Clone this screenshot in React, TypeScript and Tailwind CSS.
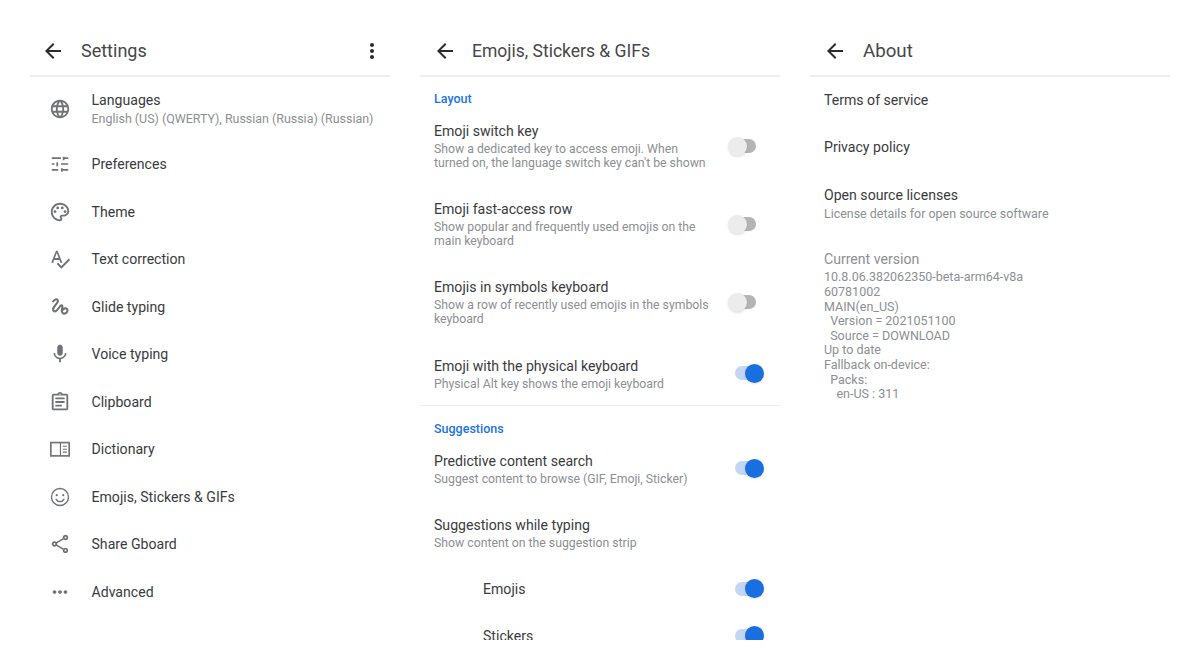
import type { ReactNode } from "react";
import {
  MdLanguage,
  MdMic,
  MdMoreHoriz,
  MdOutlineAssignment,
  MdOutlinePalette,
  MdOutlineShare,
  MdSpellcheck,
} from "react-icons/md";

const ICON = "w-[22px] h-[22px]";

function TuneIcon() {
  return (
    <svg viewBox="0 0 24 24" className={ICON} fill="none" stroke="currentColor" strokeWidth="1.900">
      <path d="M3 5.500h10M16 5.500h5M16 4v4M3 12h3M9 10v4.500M9 12h1M13 12h8M3 18.500h7M14 18.500h7M14 16.500v4" />
    </svg>
  );
}

function GlideIcon() {
  return (
    <svg viewBox="0 0 24 24" className={ICON} fill="none" stroke="currentColor" strokeWidth="2.300" strokeLinecap="round">
      <path d="M4.500 6C7 2.500 10.500 3 9.500 6.500 8 10 3.500 12 4.500 15.500 6 19 9.500 15 11.500 12 13 9.500 15 9.500 14.500 12.500 14 14.500 13 17.500 15.500 19 18.500 20 21 17 20 14.500 19 12.500 15.500 13.500 14.500 15.500" />
    </svg>
  );
}

function DictionaryIcon() {
  return (
    <svg viewBox="0 0 24 24" className={ICON} fill="none" stroke="currentColor" strokeWidth="1.800">
      <rect x="2" y="5" width="20" height="14.500" />
      <path d="M12.500 5v14.500M15 9h4.500M15 12.300h4.500M15 15.500h4.500" strokeWidth="1.300" />
    </svg>
  );
}

function SmileIcon() {
  return (
    <svg viewBox="0 0 24 24" className={ICON} fill="none" stroke="currentColor" strokeWidth="1.500">
      <circle cx="12" cy="12" r="9.300" />
      <circle cx="8.500" cy="10" r="1.200" fill="currentColor" stroke="none" />
      <circle cx="15.500" cy="10" r="1.200" fill="currentColor" stroke="none" />
      <path d="M7.800 14.500c1 1.800 2.500 2.600 4.200 2.600s3.200-.8 4.200-2.600" strokeLinecap="round" />
    </svg>
  );
}

function BackArrow() {
  return (
    <svg viewBox="0 0 24 24" className="w-6 h-6 text-[#2a2b2d]" fill="currentColor">
      <path d="M20 11H7.830l5.590-5.590L12 4l-8 8 8 8 1.410-1.410L7.830 13H20v-2z" />
    </svg>
  );
}

function MoreVert() {
  return (
    <svg viewBox="0 0 24 24" className="w-6 h-6 text-[#2a2b2d]" fill="currentColor">
      <path d="M12 8c1.100 0 2-.9 2-2s-.9-2-2-2-2 .9-2 2 .9 2 2 2zm0 2c-1.100 0-2 .9-2 2s.9 2 2 2 2-.9 2-2-.9-2-2-2zm0 6c-1.100 0-2 .9-2 2s.9 2 2 2 2-.9 2-2-.9-2-2-2z" />
    </svg>
  );
}

function Toggle({ on, className = "" }: { on: boolean; className?: string }) {
  if (on) {
    return (
      <div className={`flex items-center shrink-0 w-[29px] h-5 ${className}`}>
        <div className="w-6 h-[14px] rounded-full bg-[#c3d7f5]" />
        <div className="w-[19px] h-[19px] -ml-[14px] rounded-full bg-[#1a6fe0] shadow-sm" />
      </div>
    );
  }
  return (
    <div className="flex items-center shrink-0 w-[29px] h-5 -translate-x-[7px]">
      <div className="w-[19px] h-[19px] rounded-full bg-[#ececec] shadow-sm z-10" />
      <div className="w-4 h-[14px] -ml-[7px] rounded-r-full bg-[#b4b4b4]" />
    </div>
  );
}

function Text({ title, sub, mid }: { title: string; sub?: ReactNode; mid?: boolean }) {
  return (
    <div className="flex-1 min-w-0">
      <div className={`text-[14.100px] text-[#3a3b3e] ${mid ? "leading-[18px]" : "leading-4"}`}>{title}</div>
      {sub && (
        <div
          className={`leading-[14.400px] text-[#8c8f93] whitespace-pre-line ${
            mid ? "text-[12.250px] mt-[2px]" : "text-[12.450px] mt-1"
          }`}
        >
          {sub}
        </div>
      )}
    </div>
  );
}

function Header({ title, more, inset, size }: { title: string; more?: boolean; inset: string; size: string }) {
  return (
    <div className={`flex items-center h-[50px] border-b-2 border-[#eeeeee] ${inset}`}>
      <BackArrow />
      <div className={`flex-1 text-[#45474a] ${size}`}>{title}</div>
      {more && <MoreVert />}
    </div>
  );
}

const MENU = [
  { title: "Preferences", icon: <TuneIcon /> },
  { title: "Theme", icon: <MdOutlinePalette className={ICON} /> },
  { title: "Text correction", icon: <MdSpellcheck className={ICON} /> },
  { title: "Glide typing", icon: <GlideIcon /> },
  { title: "Voice typing", icon: <MdMic className={ICON} /> },
  { title: "Clipboard", icon: <MdOutlineAssignment className={ICON} /> },
  { title: "Dictionary", icon: <DictionaryIcon /> },
  { title: "Emojis, Stickers & GIFs", icon: <SmileIcon /> },
  { title: "Share Gboard", icon: <MdOutlineShare className={ICON} /> },
  { title: "Advanced", icon: <MdMoreHoriz className={ICON} /> },
];

const LAYOUT_ROWS = [
  { title: "Emoji switch key", sub: "Show a dedicated key to access emoji. When\nturned on, the language switch key can't be shown" },
  { title: "Emoji fast-access row", sub: "Show popular and frequently used emojis on the\nmain keyboard" },
  { title: "Emojis in symbols keyboard", sub: "Show a row of recently used emojis in the symbols\nkeyboard" },
];

const VERSION_INFO = `10.8.06.382062350-beta-arm64-v8a
60781002
MAIN(en_US)
\u00a0\u00a0Version = 2021051100
\u00a0\u00a0Source = DOWNLOAD
Up to date
Fallback on-device:
\u00a0\u00a0Packs:
\u00a0\u00a0\u00a0\u00a0en-US : 311`;

function SettingsPanel() {
  return (
    <section className="w-[360px]">
      <Header title="Settings" more inset="pl-[11px] pr-[6px] gap-4" size="text-[18px] pb-[2px]" />
      <div className="flex items-center py-[14.500px] pl-[19px] gap-[20.500px] text-[#6f7276]">
        <MdLanguage className={ICON} />
        <Text title="Languages" sub="English (US) (QWERTY), Russian (Russia) (Russian)" />
      </div>
      {MENU.map((m) => (
        <div key={m.title} className="flex items-center h-[47.500px] pl-[19px] gap-[20.500px] text-[#6f7276]">
          {m.icon}
          <Text title={m.title} />
        </div>
      ))}
    </section>
  );
}

function EmojiPanel() {
  return (
    <section className="w-[360px] h-[613px] overflow-hidden">
      <Header title="Emojis, Stickers & GIFs" inset="pl-[13px] gap-[15px]" size="text-[17.500px]" />
      <div className="pt-[14px] px-[14px] text-[12.500px] leading-[16px] font-medium text-[#1a73e8]">Layout</div>
      {LAYOUT_ROWS.map((r) => (
        <div key={r.title} className="flex items-center py-[14.500px] pl-[14px] pr-4 gap-5 h-[78px]">
          <Text mid title={r.title} sub={r.sub} />
          <Toggle on={false} />
        </div>
      ))}
      <div className="flex items-center pt-[16px] pb-[14px] pl-[14px] pr-4 h-[65px] border-b border-[#ececec]">
        <Text mid title="Emoji with the physical keyboard" sub="Physical Alt key shows the emoji keyboard" />
        <Toggle on className="-translate-y-[1px]" />
      </div>
      <div className="pt-[15px] px-[14px] text-[12.500px] leading-[16px] font-medium text-[#1a73e8]">Suggestions</div>
      <div className="flex items-center py-[14.500px] pl-[14px] pr-4 h-[64px]">
        <Text mid title="Predictive content search" sub="Suggest content to browse (GIF, Emoji, Sticker)" />
        <Toggle on className="-translate-y-[1px]" />
      </div>
      <div className="flex items-center py-[14.500px] pl-[14px] pr-4 h-[64px]">
        <Text mid title="Suggestions while typing" sub="Show content on the suggestion strip" />
      </div>
      {["Emojis", "Stickers"].map((t) => (
        <div key={t} className="flex items-center h-[47px] pl-[63px] pr-4">
          <Text title={t} />
          <Toggle on />
        </div>
      ))}
    </section>
  );
}

function AboutPanel() {
  return (
    <section className="w-[360px]">
      <Header title="About" inset="pl-[13px] gap-4" size="text-[18.700px]" />
      <div className="flex items-center h-[47.500px] px-[14px] pb-[2px]">
        <Text title="Terms of service" />
      </div>
      <div className="flex items-center h-[47.500px] px-[14px] pb-[2px]">
        <Text title="Privacy policy" />
      </div>
      <div className="py-[14.500px] px-[14px]">
        <Text title="Open source licenses" sub="License details for open source software" />
      </div>
      <div className="py-[14.500px] px-[14px]">
        <div className="text-[14.100px] leading-[18px] text-[#8c8f93]">Current version</div>
        <div className="mt-[2.500px] text-[12.500px] leading-[14.600px] text-[#8c8f93] whitespace-pre-line">{VERSION_INFO}</div>
      </div>
    </section>
  );
}

export default function App() {
  return (
    <main className="w-[1200px] h-[670px] overflow-hidden bg-white font-['Roboto',sans-serif] flex gap-[30px] px-[30px] pt-[27px]">
      <SettingsPanel />
      <EmojiPanel />
      <AboutPanel />
    </main>
  );
}
